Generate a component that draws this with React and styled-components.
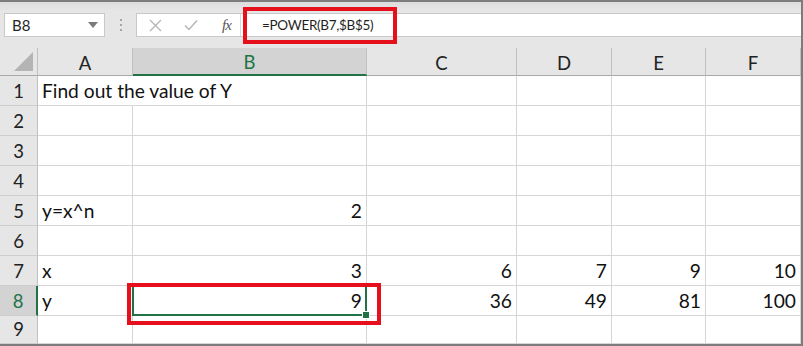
import React from 'react'
import styled, { createGlobalStyle } from 'styled-components'

const GlobalStyle = createGlobalStyle`
  body {
    margin: 0;
    background: #fff;
    font-family: Lato, "Liberation Sans", sans-serif;
  }
`

const EXCEL_GREEN = '#217346'
const ANNOTATION_RED = '#e5101c'

const Frame = styled.div`
  width: 803px;
  height: 346px;
  box-sizing: border-box;
  border-top: 2px solid #7c7c7c;
  border-right: 2px solid #7c7c7c;
  border-bottom: 2px solid #7c7c7c;
  display: flex;
  flex-direction: column;
  background: #fff;
  overflow: hidden;
`

const FormulaBar = styled.div`
  height: 46px;
  flex: none;
  box-sizing: border-box;
  padding: 11px 0 0 4px;
  display: flex;
  align-items: flex-start;
  background: linear-gradient(#dcdcdc 0, #e6e6e6 9px, #e6e6e6 100%);
`

const NameBox = styled.div`
  width: 101px;
  height: 24px;
  box-sizing: border-box;
  background: #fff;
  border: 1px solid #c9c9c9;
  display: flex;
  align-items: center;
  justify-content: space-between;
  padding: 0 6px 0 7px;
  font-size: 15px;
  color: #262626;
`

const Grip = styled.div`
  width: 31px;
  height: 24px;
  display: flex;
  flex-direction: column;
  align-items: center;
  justify-content: center;
  gap: 3px;

  span {
    width: 2px;
    height: 2px;
    background: #a6a6a6;
  }
`

const FormulaBox = styled.div`
  flex: 1;
  height: 24px;
  box-sizing: border-box;
  background: #fff;
  border: 1px solid #c9c9c9;
  border-right: none;
  display: flex;
  align-items: center;
  position: relative;
`

const IconGroup = styled.div`
  width: 104px;
  height: 100%;
  display: flex;
  align-items: center;
  padding-left: 12px;
  gap: 22px;
  box-sizing: border-box;
  border-right: 1px solid #dadada;
`

const Fx = styled.span`
  font-family: "Liberation Serif", serif;
  font-style: italic;
  font-size: 15px;
  color: #555;
  letter-spacing: -1px;
  margin-left: 2px;
`

const FormulaText = styled.span`
  padding-left: 21px;
  font-size: 13.5px;
  letter-spacing: -0.3px;
  color: #1f1f1f;
`

const Callout = styled.div`
  position: absolute;
  left: ${p => p.$left}px;
  top: ${p => p.$top}px;
  width: ${p => p.$width}px;
  height: ${p => p.$height}px;
  box-sizing: border-box;
  border: 4px solid ${ANNOTATION_RED};
  pointer-events: none;
  z-index: 5;
`

const Sheet = styled.div`
  flex: 1;
  display: grid;
  grid-template-columns: 38px 95px 234px 150px 95px 94px 95px;
  grid-template-rows: 28px repeat(8, 30px) 28px;
`

const Corner = styled.div`
  background: #e6e6e6;
  border-right: 1px solid #c0c0c0;
  border-bottom: 1px solid #a9a9a9;
  position: relative;

  &::after {
    content: '';
    position: absolute;
    right: 4px;
    bottom: 4px;
    border-style: solid;
    border-width: 0 0 19px 19px;
    border-color: transparent transparent #b4b4b4 transparent;
  }
`

const ColHeader = styled.div`
  background: ${p => (p.$active ? '#d3d3d3' : '#e6e6e6')};
  border-right: 1px solid #c0c0c0;
  border-bottom: ${p => (p.$active ? `2px solid ${EXCEL_GREEN}` : '1px solid #a9a9a9')};
  color: ${p => (p.$active ? EXCEL_GREEN : '#222')};
  font-size: 18.5px;
  display: flex;
  align-items: center;
  justify-content: center;
  padding-top: 2px;
  box-sizing: border-box;
`

const RowHeader = styled.div`
  background: ${p => (p.$active ? '#d3d3d3' : '#e6e6e6')};
  border-right: ${p => (p.$active ? `2px solid ${EXCEL_GREEN}` : '1px solid #c0c0c0')};
  border-bottom: 1px solid #cdcdcd;
  color: ${p => (p.$active ? EXCEL_GREEN : '#222')};
  font-size: 18.5px;
  display: flex;
  align-items: flex-end;
  justify-content: center;
  padding-bottom: 3px;
  box-sizing: border-box;
`

const Cell = styled.div`
  position: relative;
  border-right: ${p => (p.$spill ? 'none' : '1px solid #d6d6d6')};
  border-bottom: 1px solid #d6d6d6;
  display: flex;
  align-items: flex-end;
  justify-content: ${p => (p.$num ? 'flex-end' : 'flex-start')};
  padding: 0 4px 3px 4px;
  box-sizing: border-box;
  font-size: 19.2px;
  color: #111;
  white-space: nowrap;
  min-width: 0;
`

const Selection = styled.div`
  position: absolute;
  left: -1px;
  top: -1px;
  right: -1px;
  bottom: -1px;
  border: 2px solid ${EXCEL_GREEN};
  pointer-events: none;
  z-index: 3;

  &::after {
    content: '';
    position: absolute;
    right: -5px;
    bottom: -5px;
    width: 6px;
    height: 6px;
    background: ${EXCEL_GREEN};
    border: 1px solid #fff;
  }
`

const COLS = ['A', 'B', 'C', 'D', 'E', 'F']

const ROWS = [
  ['Find out the value of Y', '', '', '', '', ''],
  ['', '', '', '', '', ''],
  ['', '', '', '', '', ''],
  ['', '', '', '', '', ''],
  ['y=x^n', '2', '', '', '', ''],
  ['', '', '', '', '', ''],
  ['x', '3', '6', '7', '9', '10'],
  ['y', '9', '36', '49', '81', '100'],
  ['', '', '', '', '', ''],
]

const ACTIVE_ROW = 8
const ACTIVE_COL = 'B'

function Caret() {
  return (
    <svg width="10" height="6" viewBox="0 0 10 6">
      <path d="M0 0 H10 L5 6 Z" fill="#7a7a7a" />
    </svg>
  )
}

function CancelIcon() {
  return (
    <svg width="13" height="13" viewBox="0 0 13 13">
      <path d="M1 1 L12 12 M12 1 L1 12" stroke="#b6b6b6" strokeWidth="1.4" />
    </svg>
  )
}

function EnterIcon() {
  return (
    <svg width="14" height="12" viewBox="0 0 14 12">
      <path d="M1 6.5 L5 10.5 L13 1.5" stroke="#b6b6b6" strokeWidth="1.5" fill="none" />
    </svg>
  )
}

export default function App() {
  return (
    <>
      <GlobalStyle />
      <Frame>
        <FormulaBar>
          <NameBox>
            <span>B8</span>
            <Caret />
          </NameBox>
          <Grip>
            <span />
            <span />
            <span />
          </Grip>
          <FormulaBox>
            <IconGroup>
              <CancelIcon />
              <EnterIcon />
              <Fx>fx</Fx>
            </IconGroup>
            <FormulaText>=POWER(B7,$B$5)</FormulaText>
            <Callout $left={106} $top={-7} $width={154} $height={37} />
          </FormulaBox>
        </FormulaBar>

        <Sheet>
          <Corner />
          {COLS.map(c => (
            <ColHeader key={c} $active={c === ACTIVE_COL}>{c}</ColHeader>
          ))}
          {ROWS.map((row, i) => {
            const r = i + 1
            return (
              <React.Fragment key={r}>
                <RowHeader $active={r === ACTIVE_ROW}>{r}</RowHeader>
                {row.map((val, j) => {
                  const col = COLS[j]
                  const isActive = r === ACTIVE_ROW && col === ACTIVE_COL
                  const num = val !== '' && !isNaN(Number(val))
                  return (
                    <Cell key={col} $num={num} $spill={r === 1 && j === 0}>
                      {val}
                      {isActive && (
                        <>
                          <Selection />
                          <Callout $left={-6} $top={-3} $width={254} $height={42} />
                        </>
                      )}
                    </Cell>
                  )
                })}
              </React.Fragment>
            )
          })}
        </Sheet>
      </Frame>
    </>
  )
}
